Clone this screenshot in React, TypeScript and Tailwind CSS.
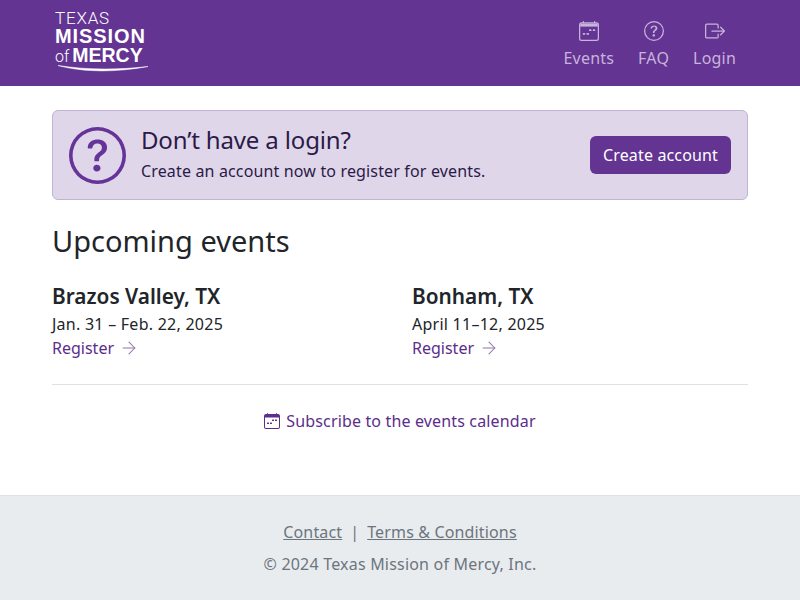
import { ArrowRight } from "lucide-react"

const font = "font-['Noto_Sans',sans-serif]"

const CalendarIcon = ({ className }: { className?: string }) => (
  <svg viewBox="0 0 16 16" fill="currentColor" className={className}>
    <path d="M11 7a.5.5 0 0 1 .5-.5h1a.5.5 0 0 1 .5.5v.5a.5.5 0 0 1-.5.5h-1a.5.5 0 0 1-.5-.5zm-3 0a.5.5 0 0 1 .5-.5h1a.5.5 0 0 1 .5.5v.5a.5.5 0 0 1-.5.5h-1a.5.5 0 0 1-.5-.5zm-5 3a.5.5 0 0 1 .5-.5h1a.5.5 0 0 1 .5.5v.5a.5.5 0 0 1-.5.5h-1a.5.5 0 0 1-.5-.5zm3 0a.5.5 0 0 1 .5-.5h1a.5.5 0 0 1 .5.5v.5a.5.5 0 0 1-.5.5h-1a.5.5 0 0 1-.5-.5z" />
    <path d="M3.5 0a.5.5 0 0 1 .5.5V1h8V.5a.5.5 0 0 1 1 0V1h1a2 2 0 0 1 2 2v11a2 2 0 0 1-2 2H2a2 2 0 0 1-2-2V3a2 2 0 0 1 2-2h1V.5a.5.5 0 0 1 .5-.5M2 2a1 1 0 0 0-1 1v11a1 1 0 0 0 1 1h12a1 1 0 0 0 1-1V3a1 1 0 0 0-1-1z" />
    <path d="M1 2h14v2.5H1z" />
  </svg>
)

const QuestionIcon = ({ className }: { className?: string }) => (
  <svg viewBox="0 0 16 16" fill="currentColor" className={className}>
    <path d="M8 15A7 7 0 1 1 8 1a7 7 0 0 1 0 14m0 1A8 8 0 1 0 8 0a8 8 0 0 0 0 16" />
    <path d="M5.255 5.786a.237.237 0 0 0 .241.247h.825c.138 0 .248-.113.266-.25.09-.656.54-1.134 1.342-1.134.686 0 1.314.343 1.314 1.168 0 .635-.374.927-.965 1.371-.673.489-1.206 1.06-1.168 1.987l.003.217a.25.25 0 0 0 .25.246h.811a.25.25 0 0 0 .25-.25v-.105c0-.718.273-.927 1.01-1.486.609-.463 1.244-.977 1.244-2.056 0-1.511-1.276-2.241-2.673-2.241-1.267 0-2.655.59-2.75 2.286m1.557 5.763c0 .533.425.927 1.01.927.609 0 1.028-.394 1.028-.927 0-.552-.42-.94-1.029-.94-.584 0-1.009.388-1.009.94" />
  </svg>
)

const LoginIcon = ({ className }: { className?: string }) => (
  <svg viewBox="0 0 16 16" fill="currentColor" className={className}>
    <path fillRule="evenodd" d="M10 12.5a.5.5 0 0 1-.5.5h-8a.5.5 0 0 1-.5-.5v-9a.5.5 0 0 1 .5-.5h8a.5.5 0 0 1 .5.5v2a.5.5 0 0 0 1 0v-2A1.5 1.5 0 0 0 9.5 2h-8A1.5 1.5 0 0 0 0 3.5v9A1.5 1.5 0 0 0 1.5 14h8a1.5 1.5 0 0 0 1.5-1.5v-2a.5.5 0 0 0-1 0z" />
    <path fillRule="evenodd" d="M15.854 8.354a.5.5 0 0 0 0-.708l-3-3a.5.5 0 0 0-.708.708L14.293 7.5H5.5a.5.5 0 0 0 0 1h8.793l-2.147 2.146a.5.5 0 0 0 .708.708z" />
  </svg>
)

const NavItem = ({ label, icon }: { label: string; icon: React.ReactNode }) => (
  <a className="flex flex-col items-center gap-[5px] text-[#c8b3dc] text-base leading-6 tracking-[0.2px]">
    {icon}
    <span>{label}</span>
  </a>
)

const Logo = () => (
  <div className="ml-[3px] flex flex-col text-white w-[96px] pb-[3px]">
    <div className="font-['Roboto',sans-serif] text-[17px] leading-[17px] font-light tracking-[0.8px]">TEXAS</div>
    <div className="font-['Liberation_Sans',sans-serif] text-[20px] leading-[19px] font-bold tracking-[0.9px]">MISSION</div>
    <div className="flex items-baseline gap-[3px] leading-[19px]">
      <span className="font-['Roboto',sans-serif] text-[16px] font-light">of</span>
      <span className="font-['Liberation_Sans',sans-serif] text-[19.5px] font-bold">MERCY</span>
    </div>
    <svg viewBox="0 0 96 8" className="w-[96px] h-[8px] -mt-[1px]">
      <path d="M3 0.5 C28 7.5 62 7.5 93 1.5 C64 5 32 5 3 0.5 Z" fill="#fff" stroke="#fff" strokeWidth="0.5" />
    </svg>
  </div>
)

const EventItem = ({ name, dates }: { name: string; dates: string }) => (
  <div className="flex flex-col">
    <h3 className="text-[20.8px] leading-6 font-semibold text-[#212529]">{name}</h3>
    <p className="mt-[4px] text-base leading-6 tracking-[0.25px] text-[#212529]">{dates}</p>
    <a className="text-base leading-6 text-[#5c2d8c] flex items-center gap-[5px]">
      Register
      <ArrowRight className="w-[20px] h-[20px] text-[#8f75ab]" strokeWidth={1.25} />
    </a>
  </div>
)

export default function App() {
  return (
    <div className={`${font} min-h-[600px] flex flex-col bg-white text-[#212529]`}>
      <header className="bg-[#633492] h-[86px] px-[52px] flex items-center justify-between">
        <Logo />
        <nav className="flex gap-[24px] pr-[12px] pt-[4px]">
          <NavItem label="Events" icon={<CalendarIcon className="w-5 h-5" />} />
          <NavItem label="FAQ" icon={<QuestionIcon className="w-5 h-5" />} />
          <NavItem label="Login" icon={<LoginIcon className="w-5 h-5" />} />
        </nav>
      </header>

      <main className="flex-1 px-[52px] pt-[24px]">
        <div className="h-[90px] rounded-md border border-[#c1b3d3] bg-[#e0d6ea] pl-[16px] pr-[16px] flex items-center">
          <QuestionIcon className="w-[57px] h-[57px] text-[#663399]" />
          <div className="ml-[15px] flex-1 pb-[3px]">
            <div className="text-2xl leading-[29px] tracking-[-0.15px] text-[#2b1a48]">Don’t have a login?</div>
            <div className="mt-[5px] text-base leading-6 tracking-[0.15px] text-[#2b1a48]">Create an account now to register for events.</div>
          </div>
          <button className="h-[38px] px-[13px] rounded-md bg-[#633492] text-white text-base tracking-[0.15px]">Create account</button>
        </div>

        <h2 className="mt-[21px] text-[29px] leading-[40px] text-[#212529]">Upcoming events</h2>

        <div className="mt-[23px] grid grid-cols-2 gap-[24px] pb-[24px] border-b border-[#dee2e6]">
          <EventItem name="Brazos Valley, TX" dates="Jan. 31 – Feb. 22, 2025" />
          <EventItem name="Bonham, TX" dates="April 11–12, 2025" />
        </div>

        <a className="mt-[24px] flex items-center justify-center gap-[6px] text-base leading-6 tracking-[0.15px] text-[#5c2d8c]">
          <CalendarIcon className="w-4 h-4" />
          Subscribe to the events calendar
        </a>
      </main>

      <footer className="h-[105px] bg-[#e9ecef] border-t border-[#dee2e6] flex flex-col items-center pt-[24px] text-[#6c757d] text-base leading-6 tracking-[0.2px]">
        <div className="flex gap-[8px] tracking-[0.15px]">
          <a className="underline">Contact</a>
          <span>|</span>
          <a className="underline">Terms &amp; Conditions</a>
        </div>
        <div className="mt-[8px]">© 2024 Texas Mission of Mercy, Inc.</div>
      </footer>
    </div>
  )
}
